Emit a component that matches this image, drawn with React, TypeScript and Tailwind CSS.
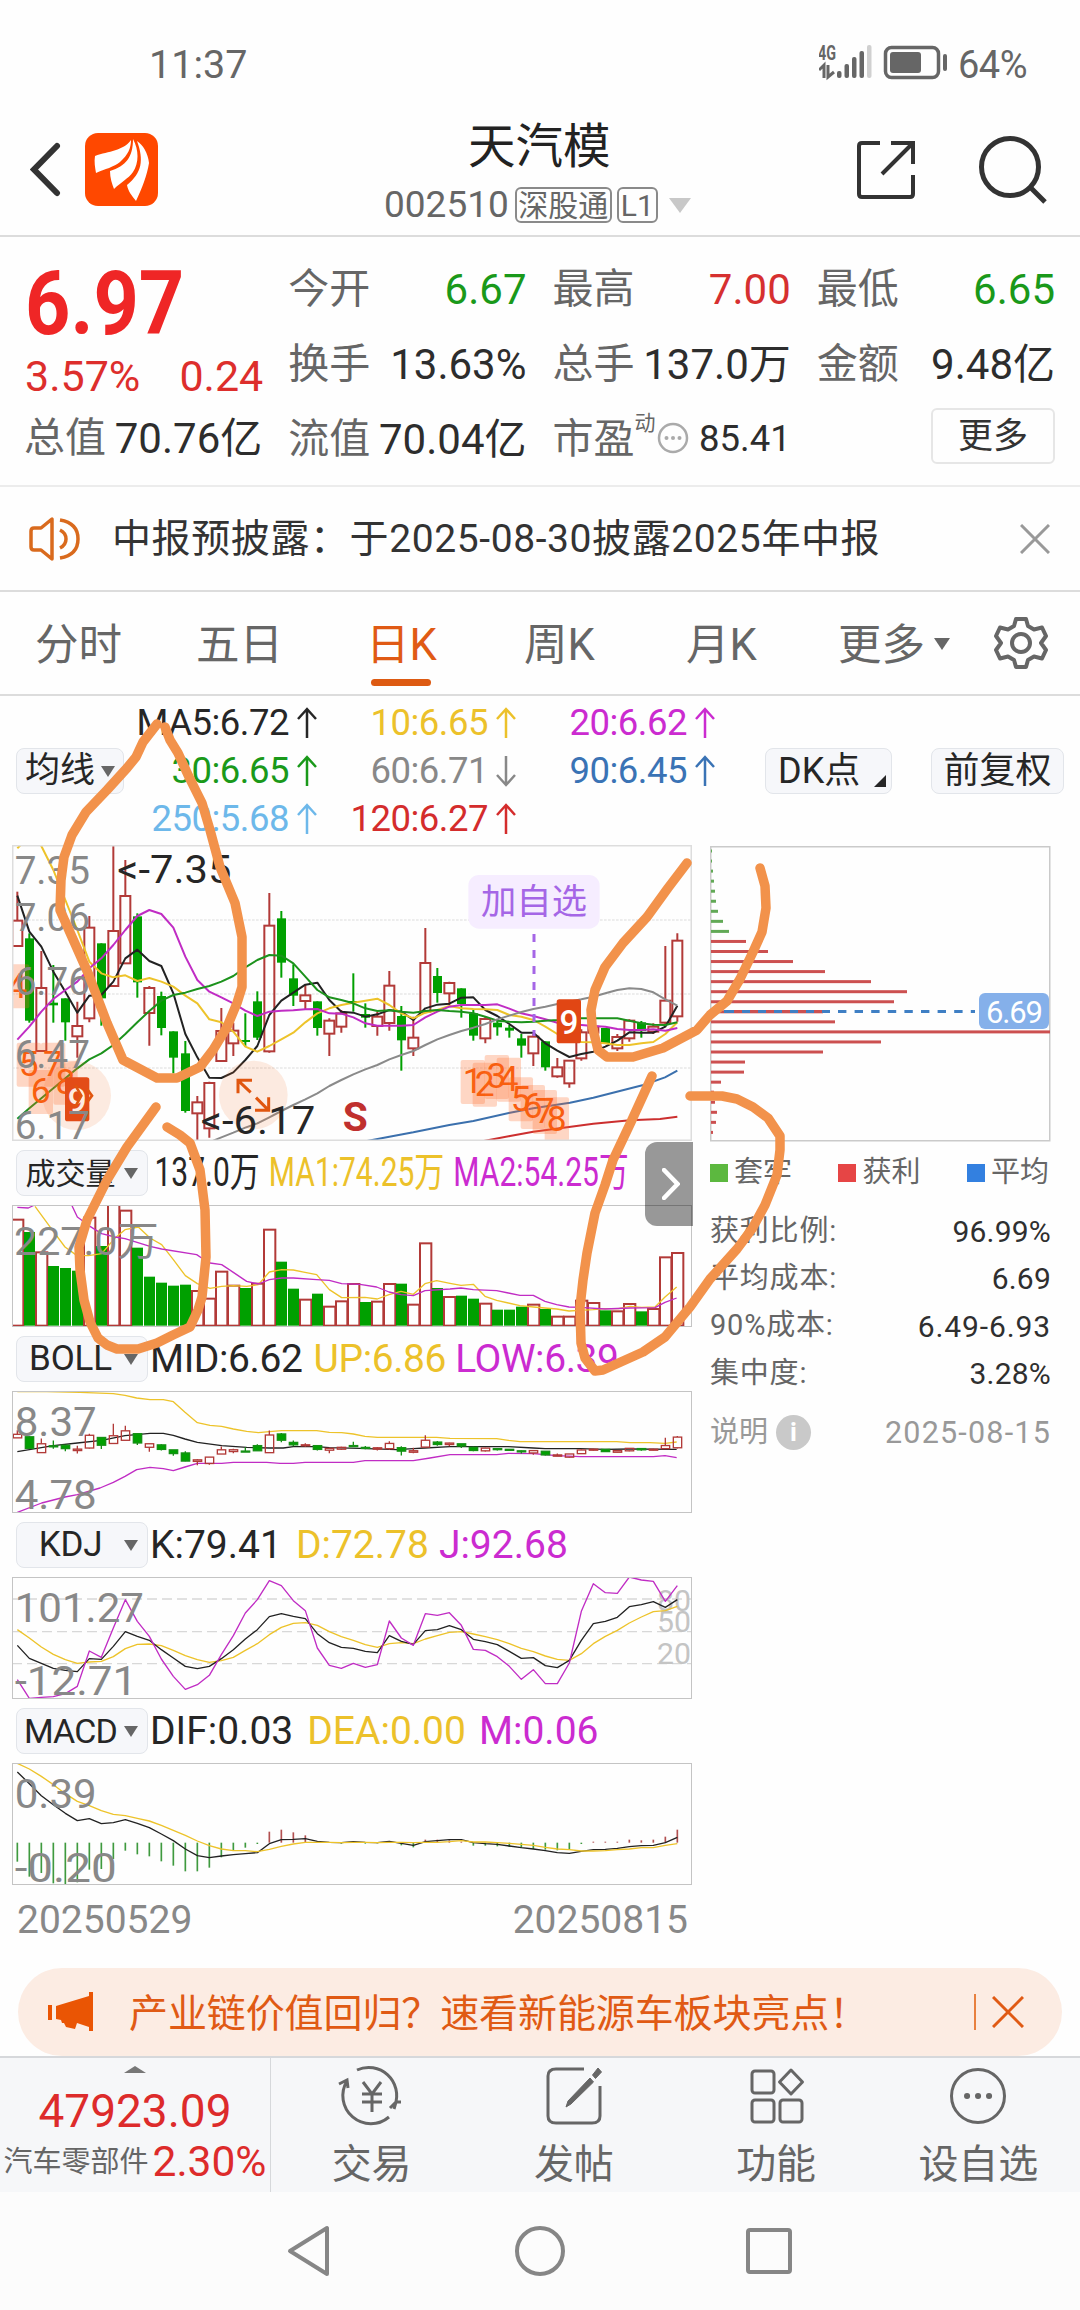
import React from "react";

type Candle = ["r" | "g", number, number, number, number];

interface IStat {
  label: string;
  value: string;
  color: string;
}

// direction, body top, body bottom, high, low
const candles: Candle[] = [
  ["r", 272, 348, 185, 348], ["g", 325, 572, 310, 578], ["r", 474, 663, 363, 663], ["g", 518, 526, 405, 578],
  ["g", 505, 577, 505, 632], ["r", 588, 619, 515, 683], ["r", 293, 565, 258, 577], ["g", 340, 505, 340, 587],
  ["r", 303, 468, 48, 468], ["r", 198, 400, 90, 400], ["g", 259, 457, 250, 503], ["r", 474, 549, 468, 647],
  ["g", 498, 594, 485, 616], ["g", 604, 683, 604, 730], ["g", 670, 843, 633, 848], ["r", 817, 850, 798, 933],
  ["r", 759, 895, 755, 923], ["r", 603, 693, 534, 693], ["r", 602, 640, 578, 678], ["g", 630, 635, 550, 650],
  ["g", 514, 623, 484, 630], ["r", 287, 664, 189, 668], ["g", 265, 398, 243, 443], ["g", 445, 497, 403, 528],
  ["r", 496, 513, 465, 540], ["g", 514, 594, 514, 617], ["r", 572, 611, 565, 678], ["r", 550, 590, 540, 608],
  ["g", 513, 517, 430, 545], ["g", 552, 563, 520, 593], ["r", 560, 588, 545, 617], ["r", 467, 579, 423, 602],
  ["g", 558, 631, 528, 722], ["r", 623, 655, 560, 678], ["r", 399, 545, 294, 550], ["g", 438, 489, 414, 518],
  ["r", 459, 490, 455, 525], ["g", 475, 522, 475, 563], ["g", 550, 617, 540, 632], ["r", 567, 625, 560, 640],
  ["g", 578, 592, 570, 617], ["g", 593, 602, 585, 623], ["g", 625, 647, 612, 683], ["r", 620, 670, 612, 708],
  ["g", 634, 712, 634, 722], ["r", 712, 739, 684, 743], ["r", 692, 760, 690, 773], ["r", 607, 685, 598, 692],
  ["r", 590, 608, 580, 620], ["g", 594, 641, 594, 641], ["r", 621, 655, 612, 663], ["r", 572, 625, 568, 635],
  ["g", 577, 603, 573, 623], ["r", 590, 605, 580, 612], ["r", 512, 578, 348, 585], ["r", 332, 559, 310, 575],
];

const ma5 = [197, 305, 350, 425, 485, 548, 497, 495, 455, 385, 359, 393, 408, 490, 612, 682, 743, 744, 727, 690, 648, 555, 512, 488, 464, 458, 510, 545, 548, 560, 553, 540, 545, 570, 535, 524, 521, 503, 502, 540, 558, 582, 608, 608, 640, 662, 681, 672, 665, 650, 632, 607, 608, 608, 590, 527];
const ma10 = [55, 20, 48, 120, 210, 300, 395, 430, 442, 436, 453, 444, 455, 470, 497, 520, 568, 577, 605, 650, 665, 648, 628, 608, 577, 550, 535, 525, 518, 512, 506, 525, 550, 565, 548, 540, 528, 535, 537, 538, 540, 555, 560, 570, 590, 612, 630, 636, 637, 640, 645, 645, 640, 636, 612, 577];
const ma20 = [629, 590, 545, 507, 480, 455, 415, 385, 345, 300, 258, 240, 252, 293, 380, 450, 485, 502, 520, 542, 558, 545, 542, 541, 538, 537, 550, 551, 562, 580, 587, 587, 587, 585, 562, 545, 530, 525, 525, 525, 523, 536, 550, 558, 568, 578, 582, 585, 588, 590, 597, 600, 600, 598, 602, 594];
const ma30 = [866, 835, 805, 775, 745, 715, 688, 670, 645, 612, 577, 543, 512, 495, 488, 477, 468, 455, 438, 412, 390, 375, 377, 400, 440, 480, 502, 510, 520, 535, 543, 541, 545, 548, 543, 540, 543, 545, 550, 560, 572, 575, 577, 575, 572, 570, 567, 565, 565, 565, 565, 572, 580, 584, 585, 577];
const ma60 = [937, 922, 908, 893, 880, 862, 843, 825, 808, 790, 768, 750, 733, 718, 705, 688, 675, 663, 645, 628, 615, 603, 593, 582, 568, 557, 546, 537, 530, 522, 515, 508, 500, 490, 480, 475, 477, 487, 508, 527];

const volumes = [270, 307, 368, 409, 415, 423, 264, 349, 220, 243, 354, 441, 459, 468, 465, 484, 507, 426, 468, 475, 462, 300, 396, 477, 510, 492, 531, 515, 463, 517, 516, 463, 462, 525, 341, 475, 502, 498, 507, 522, 540, 540, 531, 525, 538, 561, 561, 513, 520, 542, 545, 523, 545, 538, 383, 370];
const volumeGreen = [1, 3, 4, 5, 7, 10, 11, 12, 13, 14, 19, 22, 23, 25, 29, 32, 35, 37, 38, 40, 41, 42, 44, 49, 52];

const kdjK = [407, 446, 461, 476, 482, 486, 447, 449, 410, 366, 380, 392, 420, 445, 470, 477, 470, 447, 420, 388, 360, 321, 312, 320, 327, 372, 399, 413, 416, 425, 429, 378, 395, 404, 363, 360, 348, 360, 389, 396, 405, 425, 446, 444, 468, 474, 452, 392, 342, 335, 323, 291, 285, 276, 293, 270];
const kdjD = [360, 385, 412, 434, 450, 461, 457, 455, 441, 417, 404, 403, 408, 422, 438, 450, 458, 453, 443, 422, 402, 375, 353, 341, 339, 347, 366, 381, 392, 405, 413, 402, 399, 402, 388, 378, 368, 366, 373, 381, 390, 402, 416, 426, 439, 449, 452, 432, 402, 380, 362, 340, 322, 306, 303, 290];
const kdjJ = [510, 566, 563, 561, 552, 530, 424, 443, 355, 270, 335, 380, 448, 500, 539, 525, 497, 435, 378, 310, 270, 213, 228, 273, 303, 415, 467, 476, 461, 473, 465, 334, 385, 407, 312, 317, 309, 347, 419, 422, 441, 470, 509, 480, 522, 522, 460, 305, 222, 249, 251, 202, 211, 215, 275, 228];

const macdBars = [1056, 1101, 1090, 1121, 1125, 1118, 1080, 1078, 1048, 1023, 1034, 1040, 1055, 1068, 1085, 1085, 1074, 1043, 1023, 1014, 1003, 966, 960, 968, 977, 995, 997, 1002, 996, 1002, 1001, 996, 1007, 1013, 990, 990, 992, 996, 1008, 1008, 1010, 1012, 1014, 1018, 1020, 1022, 1020, 1003, 996, 996, 996, 990, 992, 990, 981, 960];
const macdDif = [787, 822, 858, 885, 911, 933, 927, 942, 939, 930, 941, 954, 973, 993, 1018, 1038, 1044, 1039, 1035, 1032, 1029, 1002, 990, 989, 987, 995, 998, 999, 996, 998, 999, 995, 1001, 1007, 996, 993, 990, 990, 999, 1002, 1004, 1009, 1014, 1018, 1023, 1029, 1031, 1025, 1020, 1019, 1016, 1011, 1008, 1007, 999, 983];
const macdDea = [761, 778, 800, 825, 852, 875, 888, 903, 914, 918, 926, 934, 947, 962, 977, 994, 1008, 1018, 1023, 1023, 1026, 1019, 1010, 1003, 998, 998, 998, 999, 998, 998, 999, 998, 998, 999, 998, 998, 996, 993, 997, 997, 999, 1001, 1004, 1007, 1013, 1018, 1020, 1024, 1024, 1023, 1020, 1018, 1014, 1014, 1007, 1002];

const chipBars = [1, 1, 2, 3, 4, 5, 7, 12, 18, 35, 57, 82, 114, 160, 196, 183, 112, 124, 339, 170, 112, 34, 33, 10, 3, 4, 6, 5, 2];

const UP = "#b23a38";
const DOWN = "#00a000";
const YELLOW = "#edc32a";
const PURPLE = "#c02cc4";

const xAt = (i: number) => 52 + i * 36;
const toPoints = (ys: number[], start = 0) => ys.map((y, i) => `${xAt(i + start)},${y}`).join(" ");

const Line: React.FC<{ points: string; color: string; width?: number }> = ({ points, color, width = 6 }) => (
  <polyline points={points} fill="none" stroke={color} strokeWidth={width} strokeLinejoin="round" />
);

const AxisText: React.FC<{ x: number; y: number; w: number; children: string; color?: string; size?: number }> = ({
  x,
  y,
  w,
  children,
  color = "#888888",
  size = 118,
}) => (
  <text x={x} y={y} textLength={w} lengthAdjust="spacingAndGlyphs" fontSize={size} fill={color}>
    {children}
  </text>
);

const CountTag: React.FC<{ x: number; y: number; n: string }> = ({ x, y, n }) => (
  <g>
    <rect x={x} y={y} width={73} height={132} rx={6} fill="#ff6a2a" fillOpacity={0.27} />
    <text x={x + 36} y={y + 100} fontSize={106} textAnchor="middle" fill="#f85e0e">
      {n}
    </text>
  </g>
);

const NineTag: React.FC<{ x: number; y: number }> = ({ x, y }) => (
  <g>
    <rect x={x} y={y} width={73} height={132} rx={8} fill="#e14614" />
    <text x={x + 37} y={y + 103} fontSize={100} fontWeight={500} textAnchor="middle" fill="#fff">
      9
    </text>
  </g>
);

const MainChart: React.FC = () => (
  <svg viewBox="36 45 2040 888" className="block w-[680px] h-[296px] ml-3">
    {[270, 492, 714].map((y) => (
      <line key={y} x1={36} x2={2076} y1={y} y2={y} stroke="#e8e8e8" strokeWidth={4} strokeDasharray="8 4" />
    ))}
    {candles.map(([dir, top, bottom, high, low], i) => {
      const x = xAt(i);
      if (dir === "g") {
        return (
          <g key={i} fill={DOWN}>
            <rect x={x - 3} y={high} width={6} height={low - high} />
            <rect x={x - 13} y={top} width={27} height={Math.max(bottom - top, 6)} />
          </g>
        );
      }
      return (
        <g key={i} stroke={UP} strokeWidth={6} fill="none">
          <path d={`M${x} ${high}V${top}M${x} ${bottom}V${low}`} />
          <rect x={x - 15} y={top} width={30} height={bottom - top} />
        </g>
      );
    })}
    <Line points={toPoints(ma5)} color="#222222" />
    <Line points={toPoints(ma10)} color={YELLOW} />
    <Line points={toPoints(ma20)} color={PURPLE} />
    <Line points={toPoints(ma30)} color="#1c921c" />
    <Line points={toPoints(ma60, 16)} color="#8a8a8a" />
    <Line points="1080,937 1168,920 1240,907 1348,885 1420,873 1530,848 1600,835 1710,818 1780,803 1930,765 1995,742 2032,722" color="#3b70ad" />
    <Line points="1430,937 1530,918 1600,905 1707,891 1780,881 1890,871 1980,867 2032,860" color="#cc2f2f" />

    {/* Nine-turn counters */}
    <CountTag x={15} y={403} n="4" />
    <CountTag x={50} y={638} n="5" />
    <CountTag x={123} y={638} n="7" />
    <CountTag x={86} y={720} n="6" />
    <CountTag x={160} y={692} n="8" />
    <NineTag x={195} y={742} />
    <CountTag x={1382} y={690} n="1" />
    <CountTag x={1418} y={698} n="2" />
    <CountTag x={1454} y={675} n="3" />
    <CountTag x={1490} y={683} n="4" />
    <CountTag x={1526} y={742} n="5" />
    <CountTag x={1562} y={765} n="6" />
    <CountTag x={1598} y={780} n="7" />
    <CountTag x={1634} y={802} n="8" />
    <circle cx={230} cy={797} r={103} fill="#f0702a" fillOpacity={0.14} />
    <path d="M226 766L244 797L226 830M262 778L276 797L262 816" fill="none" stroke="#e0560f" strokeWidth={8} />
    <circle cx={760} cy={795} r={103} fill="#f0702a" fillOpacity={0.14} />
    <path d="M752 787L714 751M714 790V751H756M768 803L806 841M806 802V841H765" fill="none" stroke="#e0560f" strokeWidth={9} />

    {/* Watchlist marker */}
    <line x1={1602} x2={1602} y1={312} y2={618} stroke="#a566e6" strokeWidth={9} strokeDasharray="24 24" />
    <rect x={1405} y={135} width={394} height={161} rx={32} fill="#f6edff" />
    <text x={1602} y={253} fontSize={106} textAnchor="middle" fill="#a566e6">
      加自选
    </text>
    <NineTag x={1670} y={508} />

    <AxisText x={44} y={163} w={226}>7.35</AxisText>
    <AxisText x={44} y={302} w={226}>7.06</AxisText>
    <AxisText x={44} y={494} w={226}>6.76</AxisText>
    <AxisText x={44} y={715} w={226}>6.47</AxisText>
    <AxisText x={44} y={926} w={226}>6.17</AxisText>
    <AxisText x={352} y={158} w={342} color="#262626">{"<-7.35"}</AxisText>
    <AxisText x={602} y={912} w={344} color="#262626">{"<-6.17"}</AxisText>
    <text x={1028} y={903} fontSize={122} fontWeight={700} fill="#c0302e">
      S
    </text>
    <rect x={38} y={47} width={2036} height={884} fill="none" stroke="#dddddd" strokeWidth={5} />
  </svg>
);

const VolumeChart: React.FC = () => (
  <svg viewBox="36 226 2040 366" className="block w-[680px] h-[122px] ml-3">
    {volumes.map((top, i) =>
      volumeGreen.includes(i) ? (
        <rect key={i} x={xAt(i) - 16} y={top} width={33} height={588 - top} fill={DOWN} />
      ) : (
        <rect key={i} x={xAt(i) - 16} y={top} width={34} height={588 - top} fill="#fff" stroke={UP} strokeWidth={6} />
      )
    )}
    <Line width={4} color={YELLOW} points="105,230 160,305 195,352 230,377 265,378 305,372 345,325 375,300 415,292 450,325 485,345 520,390 556,438 592,462 630,476 665,470 700,468 740,470 775,465 808,427 845,420 880,421 915,428 950,435 988,480 1025,504 1095,503 1132,508 1167,495 1203,485 1240,494 1275,462 1310,453 1350,461 1383,467 1420,464 1455,500 1490,512 1525,520 1560,528 1600,532 1670,538 1707,544 1740,542 1780,540 1815,537 1855,537 1890,530 1925,533 1965,532 1995,502 2030,472" />
    <Line width={4} color={PURPLE} points="52,233 85,235 104,226" />
    <Line width={4} color={PURPLE} points="215,226 232,262 270,290 305,312 345,322 375,327 450,350 485,358 590,375 605,385 630,400 665,405 700,428 740,455 775,463 808,450 845,445 880,445 950,450 988,452 1025,462 1080,464 1130,472 1167,487 1203,495 1240,498 1275,483 1350,478 1383,475 1420,480 1490,483 1525,490 1560,497 1600,497 1635,515 1670,525 1707,532 1740,533 1815,538 1890,535 1965,534 1995,518 2030,505" />
    <AxisText x={42} y={377} w={434}>227.0万</AxisText>
    <rect x={37.5} y={227.5} width={2037} height={363} fill="none" stroke="#c4c4c4" strokeWidth={3} />
  </svg>
);

const BollChart: React.FC = () => {
  const scale = (y: number) => 916 + (y - 287) * 0.1406;
  return (
    <svg viewBox="36 784 2040 366" className="block w-[680px] h-[122px] ml-3">
      <Line width={4} color={YELLOW} points="52,786 140,786 240,788 340,792 375,797 410,805 450,810 490,810 520,816 555,848 592,879 630,887 665,890 700,898 740,905 775,909 808,906 845,903 950,903 988,908 1025,909 1060,913 1095,920 1132,923 1310,923 1350,926 1490,927 1525,932 1560,936 1850,936 1890,939 1950,939 1995,941 2030,937" />
      <Line width={4} color="#222222" points="52,966 88,960 160,948 232,940 305,932 375,918 450,911 490,911 520,917 555,928 592,938 665,948 740,953 808,955 850,955 880,951 950,951 988,954 1080,956 1190,960 1240,957 1275,955 1350,951 1525,951 1600,955 1635,957 1740,957 1815,959 1890,958 2030,959" />
      <Line width={4} color={PURPLE} points="52,1148 125,1120 195,1102 232,1095 300,1075 340,1058 375,1040 410,1020 450,1013 490,1017 520,1023 555,1012 592,1001 665,1001 700,998 800,998 840,1001 880,1001 915,998 1060,998 1095,993 1240,993 1290,985 1350,975 1490,975 1525,971 1600,972 1670,978 1740,981 1960,981 1995,978 2030,984" />
      {candles.map(([dir, top, bottom, high, low], i) => {
        const x = xAt(i);
        const h = Math.max(scale(bottom) - scale(top), 3);
        return (
          <g key={i} stroke={dir === "g" ? "#159015" : UP} strokeWidth={4} fill={dir === "g" ? DOWN : "none"}>
            <path d={`M${x} ${scale(high)}V${scale(top)}M${x} ${scale(bottom)}V${scale(low)}`} />
            <rect x={x - 12} y={scale(top)} width={25} height={h} />
          </g>
        );
      })}
      <AxisText x={44} y={920} w={246} size={124}>8.37</AxisText>
      <AxisText x={44} y={1139} w={246} size={124}>4.78</AxisText>
      <rect x={37.5} y={785.5} width={2037} height={363} fill="none" stroke="#c4c4c4" strokeWidth={3} />
    </svg>
  );
};

const KdjChart: React.FC = () => (
  <svg viewBox="36 202 2040 366" className="block w-[680px] h-[122px] ml-3">
    {[268, 366, 462].map((y) => (
      <line key={y} x1={36} x2={2076} y1={y} y2={y} stroke="#d8d8d8" strokeWidth={4} strokeDasharray="30 15" />
    ))}
    <AxisText x={1971} y={303} w={102} size={90} color="#c4c4c4">80</AxisText>
    <AxisText x={1971} y={367} w={102} size={90} color="#c4c4c4">50</AxisText>
    <AxisText x={1971} y={463} w={102} size={90} color="#c4c4c4">20</AxisText>
    <Line width={4} color={YELLOW} points={toPoints(kdjD)} />
    <Line width={4} color="#222222" points={toPoints(kdjK)} />
    <Line width={4} color={PURPLE} points={toPoints(kdjJ)} />
    <AxisText x={44} y={338} w={388} size={124}>101.27</AxisText>
    <AxisText x={44} y={557} w={368} size={124}>-12.71</AxisText>
    <rect x={37.5} y={203.5} width={2037} height={363} fill="none" stroke="#c4c4c4" strokeWidth={3} />
  </svg>
);

const MacdChart: React.FC = () => (
  <svg viewBox="36 760 2040 366" className="block w-[680px] h-[122px] ml-3">
    {macdBars.map((y, i) => (
      <line key={i} x1={xAt(i)} x2={xAt(i)} y1={999} y2={y} stroke={y > 999 ? "#3f9a3f" : "#b25050"} strokeWidth={5} />
    ))}
    <Line width={4} color="#222222" points={toPoints(macdDif)} />
    <Line width={4} color={YELLOW} points={toPoints(macdDea)} />
    <AxisText x={44} y={896} w={246} size={124}>0.39</AxisText>
    <AxisText x={44} y={1116} w={306} size={124}>-0.20</AxisText>
    <rect x={37.5} y={761.5} width={2037} height={363} fill="none" stroke="#c4c4c4" strokeWidth={3} />
  </svg>
);

const Picker: React.FC<{ name: string; textSize: string }> = ({ name, textSize }) => (
  <div className="flex h-[46px] w-[132px] shrink-0 items-center rounded-lg border border-[#e2e5ea] bg-[#f6f7fa] pr-[9px] text-[#262626]">
    <span className={`flex-1 whitespace-nowrap text-center ${textSize}`}>{name}</span>
    <span className="border-x-[7px] border-t-[11px] border-x-transparent border-t-[#666]" />
  </div>
);

const IndicatorRow: React.FC<{ name: string; textSize?: string; children: React.ReactNode }> = ({
  name,
  textSize = "text-[35px] tracking-[-0.2px]",
  children,
}) => (
  <div className="flex h-16 items-center pl-4">
    <Picker name={name} textSize={textSize} />
    <div className="ml-0.5 flex-1 whitespace-nowrap">{children}</div>
  </div>
);

const ChipChart: React.FC = () => (
  <svg viewBox="0 0 341 296" className="block h-[296px] w-[341px] overflow-visible">
    <rect x={0.75} y={0.75} width={339} height={294} fill="none" stroke="#cacaca" strokeWidth={1.5} />
    {chipBars.map((w, i) => (
      <rect key={i} x={1} y={3.5 + i * 10.05} width={w} height={3} fill={i < 9 ? "#62a956" : "#cc5050"} />
    ))}
    <line x1={14} x2={120} y1={165.5} y2={165.5} stroke="#3f7fc4" strokeWidth={3} />
    <line x1={24} x2={112} y1={165.5} y2={165.5} stroke="#cc5050" strokeWidth={3} strokeDasharray="8 8" />
    <line x1={128} x2={265} y1={165.5} y2={165.5} stroke="#3f7fc4" strokeWidth={3} strokeDasharray="8.4 8.2" />
    <rect x={269} y={147} width={70} height={36} rx={6} fill="#85b0ea" />
    <text x={276} y={176.5} fontSize={31} textLength={57} fill="#fff">
      6.69
    </text>
  </svg>
);

const legend = [
  { label: "套牢", color: "bg-[#5cb83f]" },
  { label: "获利", color: "bg-[#e64545]" },
  { label: "平均", color: "bg-[#3380e0]" },
];

const costs = [
  { label: "获利比例:", value: "96.99%", spacing: "tracking-[0.2px]" },
  { label: "平均成本:", value: "6.69", spacing: "tracking-[0.2px]" },
  { label: "90%成本:", value: "6.49-6.93", spacing: "tracking-[0.9px]" },
  { label: "集中度:", value: "3.28%", spacing: "tracking-[0.2px]" },
];

const ChipPanel: React.FC = () => (
  <div className="ml-[17px] mt-px w-[341px] text-[29px]">
    <ChipChart />
    <div className="mt-[9px] flex h-[44px] items-center justify-between pr-0.5 text-[#666]">
      {legend.map((item) => (
        <div key={item.label} className="flex items-center gap-[6px]">
          <span className={`size-[18px] ${item.color}`} />
          <span>{item.label}</span>
        </div>
      ))}
    </div>
    <div className="mt-[13px]">
      {costs.map((row) => (
        <div key={row.label} className="flex h-[47.300px] items-center justify-between">
          <span className="tracking-[0.8px] text-[#666]">{row.label}</span>
          <span className={`text-[30px] text-[#2f2f2f] ${row.spacing}`}>{row.value}</span>
        </div>
      ))}
    </div>
    <div className="mt-3 flex h-[47px] items-center text-[#999]">
      <span>说明</span>
      <span className="ml-2 flex size-[35px] items-center justify-center rounded-full bg-[#c9c9c9] text-[26px] font-bold text-white">
        i
      </span>
      <span className="ml-auto text-[30.500px] tracking-[1.2px]">2025-08-15</span>
    </div>
  </div>
);

const Stat: React.FC<IStat> = ({ label, value, color }) => (
  <div className="flex items-center justify-between whitespace-nowrap">
    <span className="-ml-px text-[#666]">{label}</span>
    <span className={`text-[42px] leading-[41px] ${color}`}>{value}</span>
  </div>
);

const StatusBar: React.FC = () => (
  <div className="flex h-[96px] items-start pt-[41px] text-[#666]">
    <span className="ml-[149px] text-[39.500px] leading-[47px]">11:37</span>
    <svg viewBox="0 0 130 50" className="ml-auto mt-[-1px] block h-[50px] w-[130px]">
      <g transform="translate(-1 2)">
        <text x={0} y={18} fontSize={20} fontWeight={700} textLength={18} lengthAdjust="spacingAndGlyphs" fill="#666">
          4G
        </text>
        <path d="M1 28L6 23V36M10 23V35L16 30" fill="none" stroke="#666" strokeWidth={3} />
        <g fill="#666">
          <rect x={19} y={29} width={4.500} height={7} rx={2} />
          <rect x={26.500} y={22} width={4.500} height={14} rx={2} />
          <rect x={34} y={15} width={4.500} height={21} rx={2} />
          <rect x={41.500} y={9} width={4.500} height={27} rx={2} />
          <rect x={49} y={3} width={4.500} height={33} rx={2} fill="#d0d0d0" />
          <rect x={72} y={10} width={31} height={21} rx={3} />
          <rect x={125} y={12} width={4} height={17} rx={2} />
        </g>
        <rect x={67.500} y={5.500} width={53} height={30} rx={6} fill="none" stroke="#666" strokeWidth={3.500} />
      </g>
    </svg>
    <span className="ml-[9px] mr-[53px] text-[38px] leading-[48px] tracking-[-0.5px]">64%</span>
  </div>
);

const Header: React.FC = () => (
  <div className="relative flex h-[141px] items-start justify-between border-b-2 border-[#dcdcdc]">
    <div className="flex pt-[37px]">
      <svg viewBox="0 0 32 74" className="ml-[30px] h-[74px] w-8">
        <path d="M27 13L4 36.500L27 60" fill="none" stroke="#333" strokeWidth={6} strokeLinecap="round" />
      </svg>
      <svg viewBox="0 0 73 74" className="ml-[23px] h-[74px] w-[73px]">
        <rect width={73} height={73} rx={13} fill="#ff4800" />
        <path d="M46 7C38 18 24 18 10 23C9 29 10 34 11 40C20 36 29 34 35 29C43 22 46 15 46 7Z" fill="#fff" />
        <path d="M48 6C48 24 41 33 25 38C25 45 27 51 29 56C36 49 43 46 48 39C54 30 54 17 48 6Z" fill="#fff" />
        <path d="M52 8C59 27 57 40 42 52C43 58 47 63 51 68C57 55 62 43 64 30C63 20 58 12 52 8Z" fill="#fff" />
      </svg>
    </div>
    <div className="absolute left-[384px] top-[18px]">
      <div className="ml-[84px] text-[47.500px] leading-[66px] text-[#222]">天汽模</div>
      <div className="flex h-[50px] items-center text-[#666]">
        <span className="text-[37px]">002510</span>
        <span className="ml-[6px] flex h-9 w-[97px] items-center justify-center rounded-md border-2 border-[#8a8a8a] text-[30px]">深股通</span>
        <span className="ml-[5px] flex h-9 w-[41px] items-center justify-center rounded-md border-2 border-[#8a8a8a] text-[30px]">L1</span>
        <span className="ml-[11px] border-x-[11px] border-t-[15px] border-x-transparent border-t-[#c8c8c8]" />
      </div>
    </div>
    <div className="flex pt-[38px]">
      <svg viewBox="0 0 64 74" className="h-[74px] w-16" fill="none" stroke="#333" strokeWidth={4}>
        <path d="M27 9H9Q6 9 6 12V60Q6 63 9 63H57Q60 63 60 60V41M38 9H60V30M60 9L29 40" />
      </svg>
      <svg viewBox="0 0 74 74" className="ml-[57px] mr-[32px] h-[74px] w-[74px]" fill="none" stroke="#333" strokeWidth={5}>
        <circle cx={36} cy={33} r={28.500} />
        <path d="M56 53L71 68" />
      </svg>
    </div>
  </div>
);

const Quote: React.FC = () => (
  <div className="grid h-[250px] grid-cols-4 gap-x-[27px] border-b-2 border-[#ececec] px-[25px] pt-[15px] text-[41px] leading-none">
    <div className="flex flex-col">
      <span className="h-[104px] origin-left scale-x-[0.89] text-[89px] font-bold leading-[104px] text-[#ef2626]">6.97</span>
      <div className="-mt-px flex h-[42px] items-center justify-between text-[43px] text-[#dd2e2c]">
        <span>3.57%</span>
        <span className="-mr-px">0.24</span>
      </div>
      <div className="mt-[21px] h-[42px]">
        <Stat label="总值" value="70.76亿" color="text-[#2d2d2d]" />
      </div>
    </div>
    <div className="flex flex-col gap-[34px] pt-[17px]">
      <Stat label="今开" value="6.67" color="text-[#1a991a]" />
      <Stat label="换手" value="13.63%" color="text-[#2d2d2d]" />
      <Stat label="流值" value="70.04亿" color="text-[#2d2d2d]" />
    </div>
    <div className="flex flex-col gap-[34px] pt-[17px]">
      <Stat label="最高" value="7.00" color="text-[#d63030]" />
      <Stat label="总手" value="137.0万" color="text-[#2d2d2d]" />
      <div className="flex h-[41px] items-center text-[#666]">
        <span className="-ml-px">市盈</span>
        <span className="mb-8 text-[21px]">动</span>
        <svg viewBox="0 0 32 32" className="mb-1 ml-px size-8" fill="#aaa">
          <circle cx={16} cy={16} r={14} fill="none" stroke="#aaa" strokeWidth={2.500} />
          <circle cx={9.500} cy={16} r={2} />
          <circle cx={16} cy={16} r={2} />
          <circle cx={22.500} cy={16} r={2} />
        </svg>
        <span className="ml-auto text-[36.500px] text-[#2d2d2d]">85.41</span>
      </div>
    </div>
    <div className="flex flex-col gap-[34px] pt-[17px]">
      <Stat label="最低" value="6.65" color="text-[#1a991a]" />
      <Stat label="金额" value="9.48亿" color="text-[#2d2d2d]" />
      <div className="-mt-[11px] ml-auto flex h-[56px] w-[124px] items-center justify-center rounded-md border-2 border-[#e6e6e6] text-[35px] text-[#333]">
        更多
      </div>
    </div>
  </div>
);

const Notice: React.FC = () => (
  <div className="flex h-[105px] items-center border-b-2 border-[#dcdcdc] pl-[29px]">
    <svg viewBox="0 0 52 46" className="h-[46px] w-[52px]" fill="none" stroke="#d96a1d" strokeWidth={3.500}>
      <path d="M23 3V43L12 34H5Q2 34 2 31V15Q2 12 5 12H12Z" strokeLinejoin="round" />
      <path d="M31 14Q37 17 37 23Q37 29 31 32M31 4Q49 7 49 23Q49 39 31 42" />
    </svg>
    <span className="ml-[31px] whitespace-nowrap pt-0.5 text-[39px] tracking-[0.6px] text-[#333]">
      中报预披露：于2025-08-30披露2025年中报
    </span>
    <svg viewBox="0 0 30 30" className="ml-auto mr-[30px] size-[30px]" stroke="#999" strokeWidth={3}>
      <path d="M1 1L29 29M29 1L1 29" />
    </svg>
  </div>
);

const Tabs: React.FC = () => (
  <div className="flex h-[104px] items-center border-b-2 border-[#dcdcdc] pl-[35px] pt-[6px] text-[43.500px] text-[#666]">
    <span className="w-[161px]">分时</span>
    <span className="w-[170px]">五日</span>
    <div className="relative w-[158px] text-[#e05a14]">
      日K
      <span className="absolute left-[5px] top-[66px] h-[7px] w-[60px] rounded-full bg-[#dd5a12]" />
    </div>
    <span className="w-[162px]">周K</span>
    <span className="w-[152px]">月K</span>
    <span>更多</span>
    <span className="mb-1 ml-[9px] border-x-[8px] border-t-[12px] border-x-transparent border-t-[#666]" />
    <svg viewBox="0 0 54 54" className="mb-1.5 ml-auto mr-[32px] size-[54px]" fill="none" stroke="#666" strokeWidth={4}>
      <path d="M22 3H32L34 10L40 13.500L48 11.500L52 20L47 27L52 34L48 42.500L40 40.500L34 44L32 51H22L20 44L14 40.500L6 42.500L2 34L7 27L2 20L6 11.500L14 13.500L20 10Z" strokeLinejoin="round" />
      <circle cx={27} cy={27} r={9} />
    </svg>
  </div>
);

const averages = [
  { text: "MA5:6.72", color: "text-[#262626]", down: false },
  { text: "10:6.65", color: "text-[#ecc12a]", down: false },
  { text: "20:6.62", color: "text-[#cb2bd0]", down: false },
  { text: "30:6.65", color: "text-[#1a991a]", down: false },
  { text: "60:6.71", color: "text-[#888888]", down: true },
  { text: "90:6.45", color: "text-[#3a73b5]", down: false },
  { text: "250:5.68", color: "text-[#6db8ea]", down: false },
  { text: "120:6.27", color: "text-[#d42c2c]", down: false },
];

const Averages: React.FC = () => (
  <div className="flex h-[149px] items-center pt-px">
    <div className="ml-4 flex h-[46px] w-[108px] items-center justify-between rounded-lg border border-[#e2e5ea] bg-[#f6f7fa] px-2 text-[35px] text-[#262626]">
      均线
      <span className="border-x-[7px] border-t-[11px] border-x-transparent border-t-[#666]" />
    </div>
    <div className="grid grid-cols-[193px_199px_199px] text-[36.500px] leading-[48px] tracking-[-0.5px]">
      {averages.map((ma) => (
        <div key={ma.text} className={`flex items-center justify-end whitespace-nowrap ${ma.color}`}>
          {ma.text}
          <svg viewBox="0 0 20 32" className="ml-2 h-8 w-5" fill="none" stroke="currentColor" strokeWidth={2.500}>
            {ma.down ? <path d="M10 1V30M1 20L10 30L19 20" /> : <path d="M10 31V2M1 12L10 2L19 12" />}
          </svg>
        </div>
      ))}
    </div>
    <div className="ml-[50px] flex h-[46px] w-[127px] items-center rounded-lg border border-[#e2e5ea] bg-[#f6f7fa] pl-3 text-[36px] text-[#262626]">
      DK点
      <svg viewBox="0 0 12 12" className="ml-auto mr-[5px] mt-5 size-3">
        <path d="M12 0V12H0Z" fill="#262626" />
      </svg>
    </div>
    <div className="ml-[39px] flex h-[46px] w-[133px] items-center justify-center rounded-lg border border-[#e2e5ea] bg-[#f6f7fa] text-[36px] text-[#262626]">
      前复权
    </div>
  </div>
);

const Charts: React.FC = () => (
  <div className="flex h-[1123px]">
    <div className="relative w-[693px]">
      <MainChart />
      <IndicatorRow name="成交量" textSize="text-[30px]">
        <div className="w-max origin-left scale-x-[0.75] pl-1.5 text-[40px] text-[#262626]">
          137.0万<span className="ml-3 text-[#ecc12a]">MA1:74.25万</span>
          <span className="ml-3 text-[#cb2bd0]">MA2:54.25万</span>
        </div>
      </IndicatorRow>
      <VolumeChart />
      <IndicatorRow name="BOLL">
        <div className="text-[39px] tracking-[-0.4px] text-[#262626]">
          MID:6.62<span className="ml-[11px] text-[#ecc12a]">UP:6.86</span>
          <span className="ml-[9px] text-[#cb2bd0]">LOW:6.39</span>
        </div>
      </IndicatorRow>
      <BollChart />
      <IndicatorRow name="KDJ">
        <div className="text-[39px] text-[#262626]">
          K:79.41<span className="ml-[14px] text-[#ecc12a]">D:72.78</span>
          <span className="ml-[10px] text-[#cb2bd0]">J:92.68</span>
        </div>
      </IndicatorRow>
      <KdjChart />
      <IndicatorRow name="MACD" textSize="text-[34px] tracking-[-0.8px]">
        <div className="text-[39px] text-[#262626]">
          DIF:0.03<span className="ml-[14px] text-[#ecc12a]">DEA:0.00</span>
          <span className="ml-[13px] text-[#cb2bd0]">M:0.06</span>
        </div>
      </IndicatorRow>
      <MacdChart />
      <div className="flex h-[70px] items-center justify-between pl-[17px] pr-[5px] text-[39px] text-[#888]">
        <span>20250529</span>
        <span>20250815</span>
      </div>
      <div className="absolute right-0 top-[297px] flex h-[84px] w-12 items-center justify-center rounded-l-xl bg-black/40">
        <svg viewBox="0 0 18 32" className="ml-1 h-8 w-[18px]">
          <path d="M2 2L15.500 16L2 30" fill="none" stroke="#fff" strokeWidth={4.500} strokeLinecap="round" />
        </svg>
      </div>
    </div>
    <ChipPanel />
  </div>
);

const Promo: React.FC = () => (
  <div className="mx-[18px] flex h-[88px] items-center rounded-[44px] bg-[#fcece3] pl-[30px] text-[#e05a14]">
    <svg viewBox="0 0 46 40" className="h-10 w-[46px]" fill="#ea5504">
      <path d="M0 13H4V28H0Z" />
      <path d="M8 14L41 4V0H45V39H41V35L29 31L27 37L18 35L16 31L14 31L13 28L8 27Z" />
    </svg>
    <span className="ml-[35px] whitespace-nowrap pt-1 text-[39px] tracking-[-0.1px]">产业链价值回归？速看新能源车板块亮点！</span>
    <span className="ml-auto h-9 w-0.5 bg-[#e8803f]" />
    <svg viewBox="0 0 32 32" className="ml-4 mr-[38px] size-8" stroke="#e05a14" strokeWidth={3}>
      <path d="M1 1L31 31M31 1L1 31" />
    </svg>
  </div>
);

const BottomBar: React.FC = () => (
  <div className="flex h-[136px] border-t-2 border-[#d6d8db] bg-[#f6f7f9] text-[#666]">
    <div className="flex w-[271px] flex-col items-center border-r border-[#d6d8db] pt-[8px]">
      <span className="border-x-[11px] border-b-[7px] border-x-transparent border-b-[#777]" />
      <span className="mt-[8px] text-[46px] leading-[60px] text-[#dd2b2b]">47923.09</span>
      <div className="flex items-center whitespace-nowrap leading-[42px]">
        <span className="text-[29px]">汽车零部件</span>
        <span className="ml-1 text-[42.500px] text-[#dd2b2b]">2.30%</span>
      </div>
    </div>
    {[
      {
        label: "交易",
        icon: (
          <>
            <path d="M21 6A28 28 0 0 1 59 41M53 53A28 28 0 0 1 11 17M3 20L11 16L12 24M54 44L60 38L65 38M60 38L58 45" />
            <path d="M27 18L36 30L45 18M26 30H46M26 38H46M36 30V48" />
          </>
        ),
      },
      {
        label: "发帖",
        icon: (
          <>
            <path d="M46 5H18Q10 5 10 12V52Q10 59 18 59H54Q62 59 62 52V22" />
            <path d="M54.500 11L60 4L63.500 8L57.500 14.500ZM52 14L55.500 18L33 40L28 43L30 37Z" fill="#666" strokeWidth={1} />
          </>
        ),
      },
      {
        label: "功能",
        icon: (
          <>
            <rect x={12} y={7} width={22} height={22} rx={3} />
            <rect x={12} y={36} width={22} height={22} rx={3} />
            <rect x={40} y={36} width={22} height={22} rx={3} />
            <path d="M51 6L62.500 18L51 30L39.500 18Z" strokeLinejoin="round" />
          </>
        ),
      },
      {
        label: "设自选",
        icon: (
          <>
            <circle cx={36} cy={32} r={26.500} />
            <path d="M25 32H25.100M36 32H36.100M47 32H47.100" strokeWidth={6} strokeLinecap="round" />
          </>
        ),
      },
    ].map((item) => (
      <div key={item.label} className="flex flex-1 flex-col items-center pr-px pt-[6px]">
        <svg viewBox="0 0 72 64" className="h-16 w-[72px]" fill="none" stroke="#666" strokeWidth={3}>
          {item.icon}
        </svg>
        <span className="mt-3 text-[40px] leading-[50px]">{item.label}</span>
      </div>
    ))}
  </div>
);

const NavBar: React.FC = () => (
  <div className="flex h-[118px] items-center bg-[#fcfcfc] pl-[282px]">
    <svg viewBox="0 0 54 54" className="size-[54px]" fill="none" stroke="#868686" strokeWidth={4}>
      <path d="M45 4V50L8 27Z" strokeLinejoin="round" />
    </svg>
    <svg viewBox="0 0 54 54" className="ml-[177px] size-[54px]" fill="none" stroke="#868686" strokeWidth={4}>
      <circle cx={27} cy={27} r={23} />
    </svg>
    <svg viewBox="0 0 54 54" className="ml-[175px] size-[54px]" fill="none" stroke="#868686" strokeWidth={4}>
      <rect x={6} y={6} width={42} height={42} rx={2} />
    </svg>
  </div>
);

// Freehand marker strokes drawn over the page
const Marker: React.FC = () => (
  <svg
    viewBox="0 0 1080 2310"
    className="pointer-events-none absolute left-0 top-0 h-[2310px] w-[1080px]"
    fill="none"
    stroke="#f2924b"
    strokeWidth={9.500}
    strokeLinecap="round"
    strokeLinejoin="round"
  >
    <path d="M157 724L143 742L136 757L127 768L107 790L86 812L72 835L64 857L61 880L60 910L72 937L88 973L107 1023L123 1060L157 1078L177 1078L200 1067L213 1050L227 1027L237 1003L242 987V937L235 903L220 867L210 830L202 803L189 777L178 753L170 740L165 727" />
    <path d="M156 1107L127 1147L107 1180L87 1220L79 1247L80 1270L84 1300L90 1322L98 1338L107 1345L117 1349H138L157 1343L173 1335L190 1327L198 1310L202 1297L206 1257L205 1210L200 1170L190 1143L180 1135L167 1127" />
    <path d="M687 863L668 888L647 917L623 943L605 967L595 990L591 1010L592 1025L598 1050L607 1057H633L663 1048L680 1039L697 1030L710 1015L727 1001L740 979L753 952L762 932L766 908L765 886L760 868" />
    <path d="M652 1076L631 1122L613 1160L605 1185L595 1213L587 1253L583 1280L580 1307L581 1343L585 1358L595 1371L603 1370L643 1352L665 1337L690 1307L710 1279L737 1249L752 1229L765 1205L777 1175L780 1150V1136L768 1118L753 1107L737 1099L722 1096H690" />
  </svg>
);

const App: React.FC = () => {
  return (
    <div className="relative h-[2310px] w-[1080px] overflow-hidden bg-[#fefefe] font-['Roboto','Noto_Sans_CJK_SC',sans-serif]">
      <StatusBar />
      <Header />
      <Quote />
      <Notice />
      <Tabs />
      <Averages />
      <Charts />
      <Promo />
      <BottomBar />
      <NavBar />
      <Marker />
    </div>
  );
};

export default App;
